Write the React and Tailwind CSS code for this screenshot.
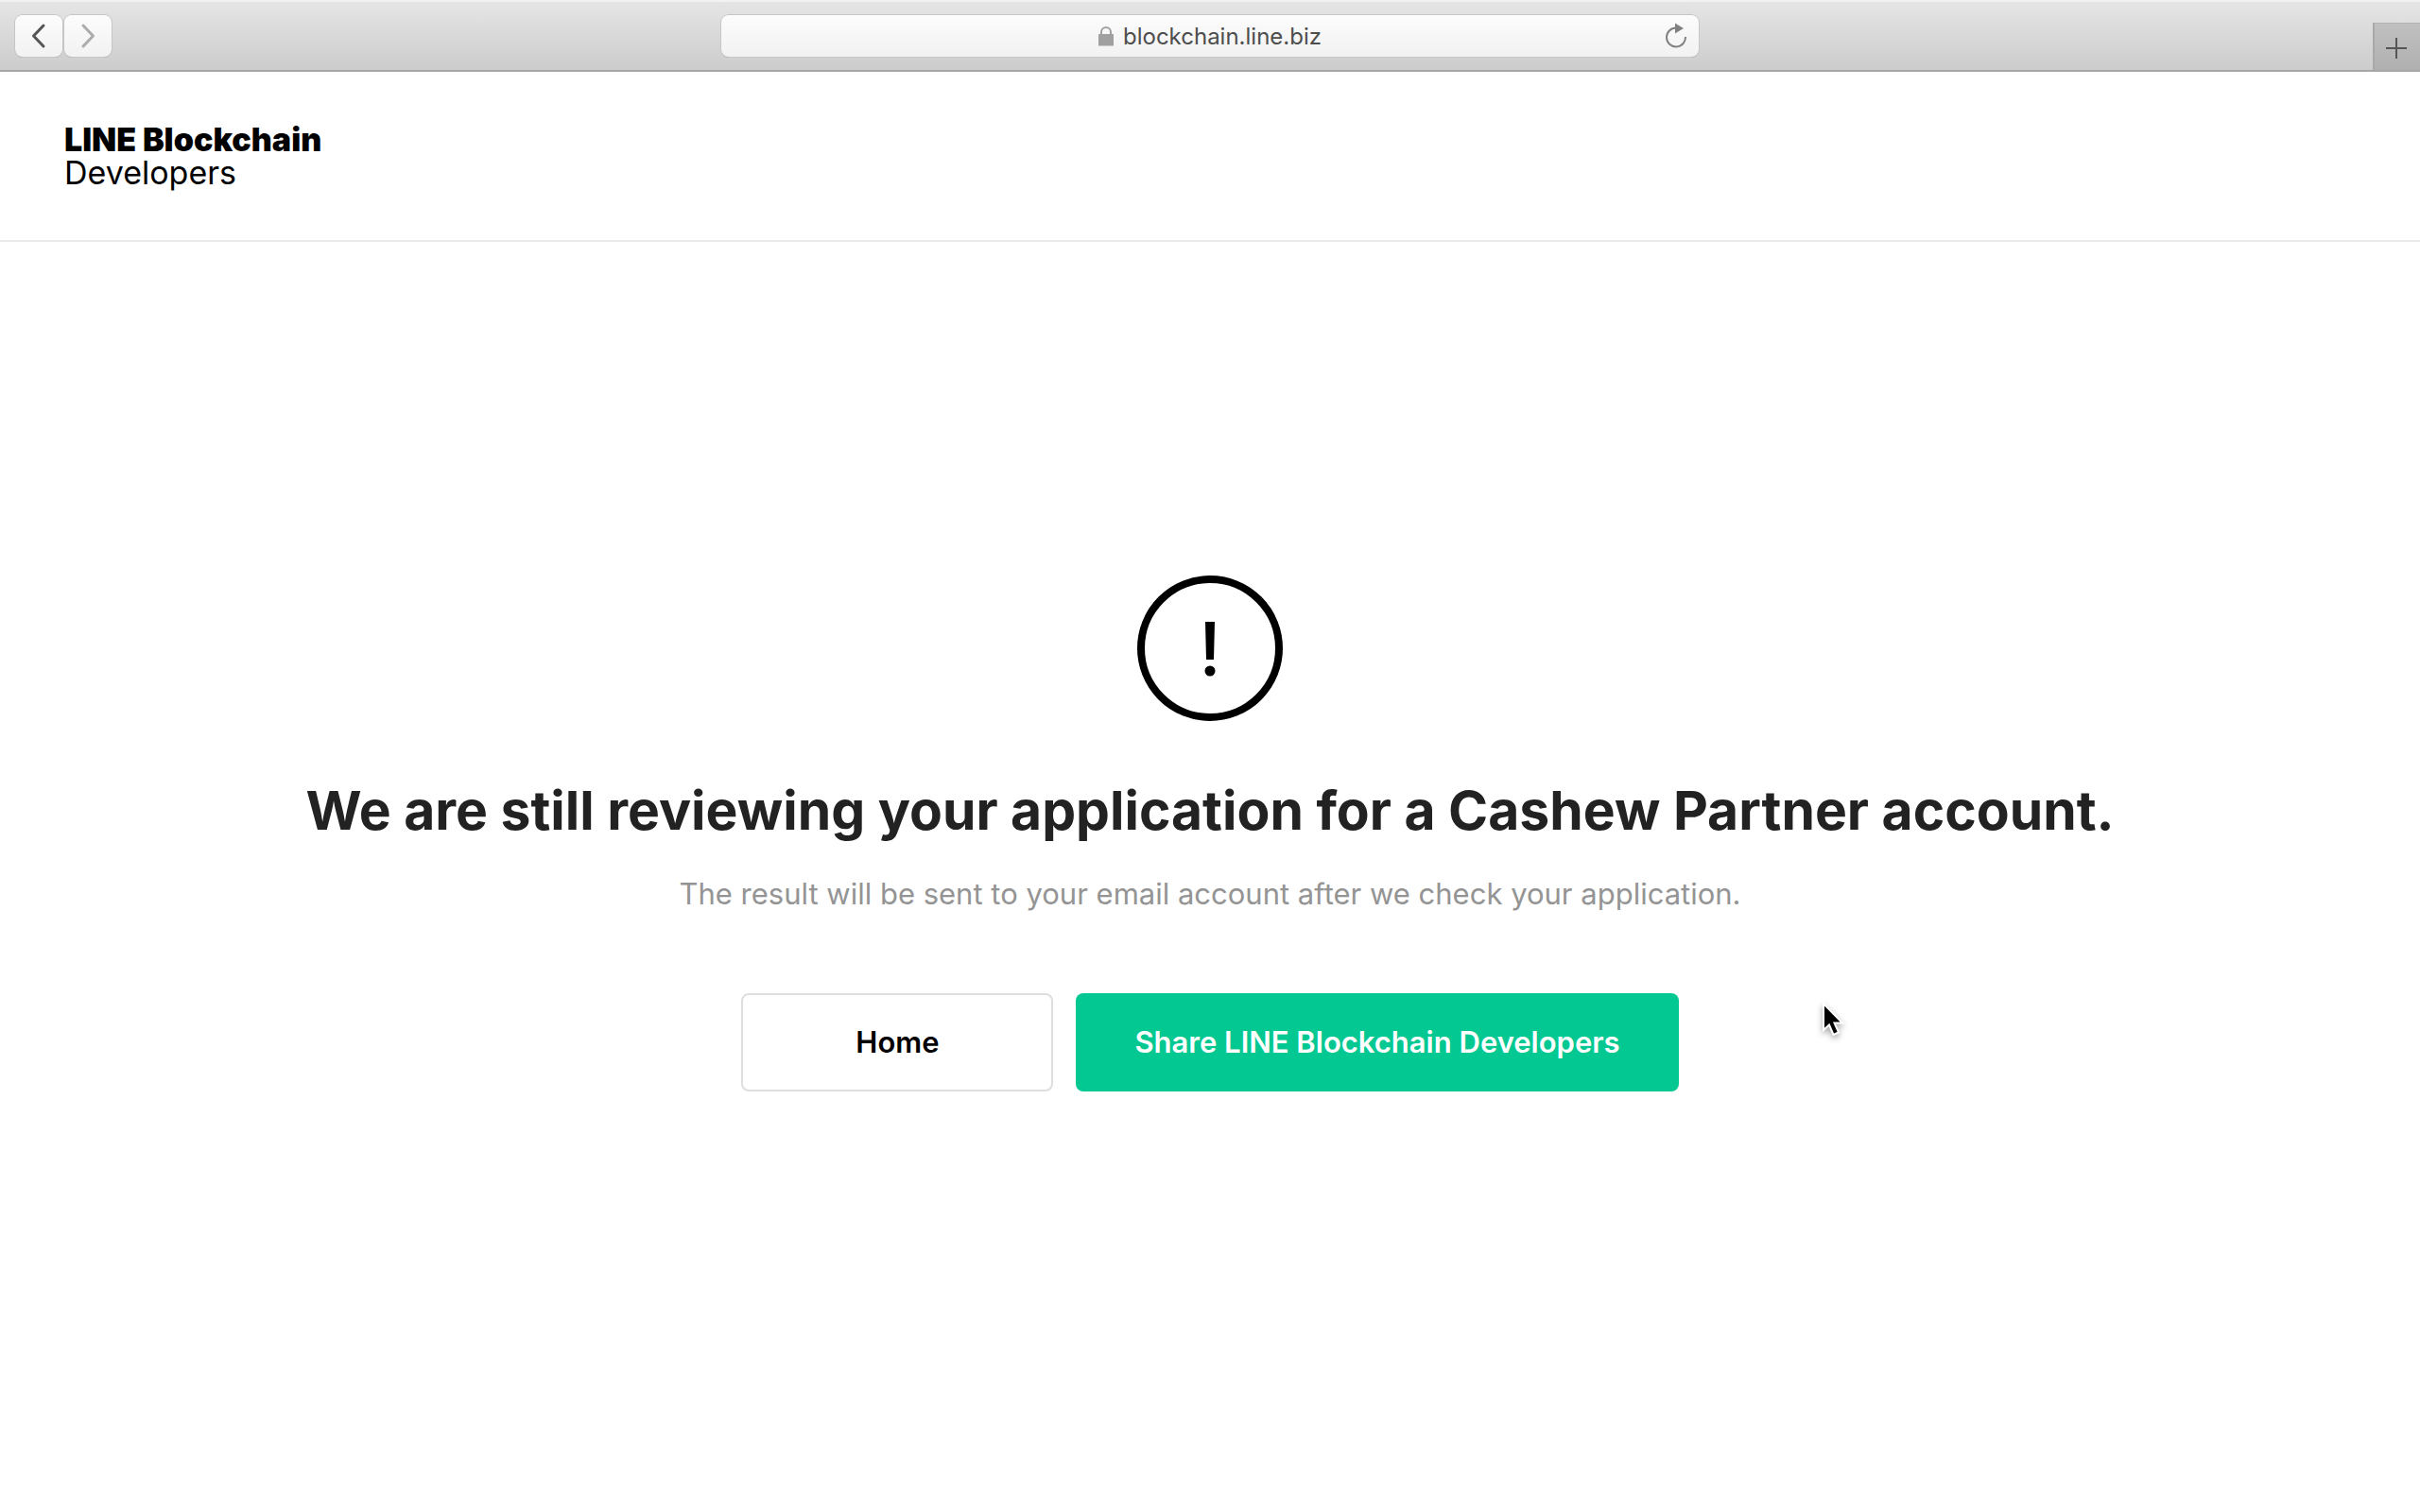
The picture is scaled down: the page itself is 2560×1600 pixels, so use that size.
function ChevronLeft() {
  return (
    <svg width="16" height="28" viewBox="0 0 16 28" fill="none" stroke="#555" strokeWidth="3" strokeLinecap="round" strokeLinejoin="round" aria-hidden="true">
      <path d="M13 3 2.500 14 13 25" />
    </svg>
  );
}

function ChevronRight() {
  return (
    <svg width="16" height="28" viewBox="0 0 16 28" fill="none" stroke="#acacac" strokeWidth="3" strokeLinecap="round" strokeLinejoin="round" aria-hidden="true">
      <path d="M3 3 13.500 14 3 25" />
    </svg>
  );
}

function Lock() {
  return (
    <svg width="16" height="21" viewBox="0 0 16 21" aria-hidden="true">
      <rect y="8" width="16" height="12.500" rx="0.500" fill="#a0a0a0" />
      <path d="M3 9V6a5 5 0 0 1 10 0v3" fill="none" stroke="#a0a0a0" strokeWidth="2" />
    </svg>
  );
}

function Reload() {
  return (
    <svg width="24" height="28" viewBox="0 0 24 28" aria-hidden="true">
      <path d="M12 5.500A10 10 0 1 0 22 15" fill="none" stroke="#808080" strokeWidth="2" />
      <path d="M11 0.500v11L20 6z" fill="#808080" />
    </svg>
  );
}

function Toolbar() {
  return (
    <header className="grid h-[76px] grid-cols-[1fr_minmax(0,1034px)_1fr] items-start border-b-2 border-[#a6a6a6] bg-gradient-to-b from-[#e6e6e6] to-[#cccccc] shadow-[inset_0_2px_0_#f2f2f2]">
      <nav className="flex gap-0.5 pt-4 pl-4" aria-label="History">
        <button aria-label="Back" className="flex h-11 w-[50px] items-center justify-center rounded-lg bg-gradient-to-b from-[#fcfcfc] to-[#f2f2f2] shadow-[0_0_0_1px_#c6c6c6,0_1px_0_0_#a3a3a3]">
          <ChevronLeft />
        </button>
        <button aria-label="Forward" className="flex h-11 w-[50px] items-center justify-center rounded-lg bg-gradient-to-b from-[#fcfcfc] to-[#f2f2f2] shadow-[0_0_0_1px_#c6c6c6,0_1px_0_0_#a3a3a3]">
          <ChevronRight />
        </button>
      </nav>
      <div className="mt-4 grid h-11 grid-cols-[1fr_auto_1fr] items-center rounded-lg bg-gradient-to-b from-[#fcfcfc] to-[#f2f2f2] px-3 shadow-[0_0_0_1px_#c6c6c6,0_1px_0_0_#a3a3a3]">
        <span />
        <div className="flex items-center gap-2.5">
          <Lock />
          <span className="pt-0.5 text-2xl text-[#4d4d4d]">blockchain.line.biz</span>
        </div>
        <button aria-label="Reload" className="justify-self-end">
          <Reload />
        </button>
      </div>
      <button aria-label="New tab" className="flex h-[50px] w-[50px] items-center justify-center self-end justify-self-end border-t border-l-2 border-t-[#b4b4b4] border-l-[#a9a9a9] bg-gradient-to-b from-[#c0c0c0] to-[#b0b0b0] pt-0.5 pr-0.5">
        <svg width="22" height="22" viewBox="0 0 22 22" stroke="#555" strokeWidth="2" aria-hidden="true">
          <path d="M11 0v22M0 11h22" />
        </svg>
      </button>
    </header>
  );
}

function Pointer() {
  return (
    <svg className="absolute top-[1058px] left-[1924px] drop-shadow-[0_3px_3px_rgba(0,0,0,0.35)]" width="32" height="44" viewBox="0 0 32 44" aria-hidden="true">
      <path d="M5 4v28l6-5.500 4.500 10.500 5.500-2.500-4.500-10h8.500z" fill="#000" stroke="#fff" strokeWidth="2" />
    </svg>
  );
}

export default function App() {
  return (
    <div className='relative min-h-screen bg-white font-[Inter,"Liberation_Sans",sans-serif]'>
      <Toolbar />
      <div className="h-[180px] border-b-2 border-[#ebebeb] px-[68px] pt-[54px]">
        <a href="#" className="inline-block text-[34px] leading-[35px] text-black">
          <strong className="font-black">LINE Blockchain</strong>
          <br />
          Developers
        </a>
      </div>
      <main className="flex flex-col items-center px-8 pt-[353px] text-center">
        <svg width="154" height="154" viewBox="0 0 154 154" aria-hidden="true">
          <circle cx="77" cy="77" r="73" fill="none" stroke="#000" strokeWidth="8" />
          <path d="M72 49h10l-1 40h-8z" />
          <circle cx="77" cy="101" r="5.500" />
        </svg>
        <h1 className="mt-[59px] text-[57px] leading-[72px] font-bold text-[#222]">
          We are still reviewing your application for a Cashew Partner account.
        </h1>
        <p className="mt-8 text-[31px] leading-10 text-[#949494]">
          The result will be sent to your email account after we check your application.
        </p>
        <div className="mt-[85px] flex gap-6">
          <button className="h-[104px] w-[330px] rounded-lg border-2 border-[#dedede] text-[31px] font-semibold text-black">Home</button>
          <button className="h-[104px] rounded-lg bg-[#03c892] px-[62px] text-[31px] font-semibold text-white">Share LINE Blockchain Developers</button>
        </div>
      </main>
      <Pointer />
    </div>
  );
}
